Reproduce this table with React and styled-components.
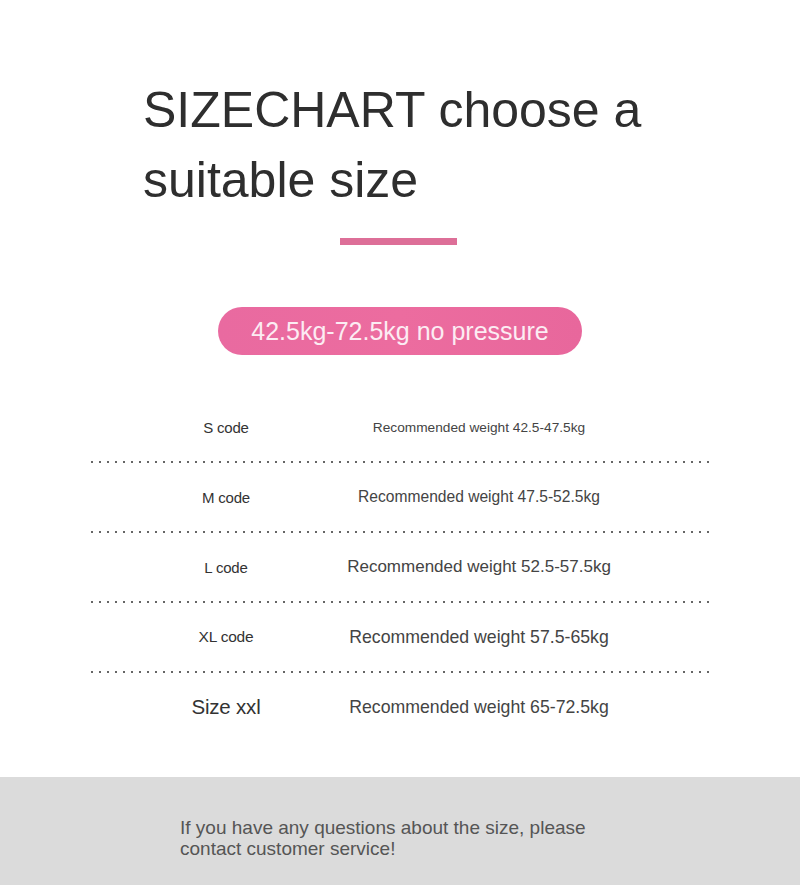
import styled, { createGlobalStyle } from "styled-components";

const sizes = [
  { code: "S code", codeSize: 15, text: "Recommended weight 42.5-47.5kg", textSize: 13.7 },
  { code: "M code", codeSize: 15, text: "Recommended weight 47.5-52.5kg", textSize: 15.6 },
  { code: "L code", codeSize: 15, text: "Recommended weight 52.5-57.5kg", textSize: 17 },
  { code: "XL code", codeSize: 15.5, text: "Recommended weight 57.5-65kg", textSize: 17.7 },
  { code: "Size xxl", codeSize: 20.5, text: "Recommended weight 65-72.5kg", textSize: 17.7 },
];

const App = () => {
  return (
    <>
      <GlobalStyle />
      <Page>
        <Header>
          <Title>
            SIZECHART choose a
            <br />
            suitable size
          </Title>
          <Accent />
          <Pill>42.5kg-72.5kg no pressure</Pill>
        </Header>

        <Chart>
          {sizes.map((row, i) => (
            <div key={row.code}>
              {i > 0 && <Dots />}
              <Row>
                <CodeCell $size={row.codeSize}>{row.code}</CodeCell>
                <WeightCell $size={row.textSize}>{row.text}</WeightCell>
              </Row>
            </div>
          ))}
        </Chart>

        <Footer>
          <FooterText>
            If you have any questions about the size, please
            <br />
            contact customer service!
          </FooterText>
        </Footer>
      </Page>
    </>
  );
};

export default App;

const GlobalStyle = createGlobalStyle`
  body {
    margin: 0;
    background: #fff;
    font-family: "Liberation Sans", Arial, sans-serif;
  }
`;

const Page = styled.div`
  width: 800px;
  display: flex;
  flex-direction: column;
`;

const Header = styled.div`
  display: flex;
  flex-direction: column;
  align-items: center;
  padding-top: 75px;
`;

const Title = styled.h1`
  align-self: flex-start;
  margin: 0 0 0 143px;
  font-size: 50px;
  line-height: 70px;
  font-weight: 400;
  color: #2e2e2e;
`;

const Accent = styled.div`
  width: 117px;
  height: 7px;
  margin-top: 23px;
  margin-left: -3px;
  background: #dd6f98;
`;

const Pill = styled.div`
  width: 364px;
  height: 48px;
  margin-top: 62px;
  border-radius: 24px;
  background: linear-gradient(90deg, #e96aa0, #ec6c9f 50%, #e8679c);
  color: #fcecf3;
  font-size: 25px;
  display: flex;
  align-items: center;
  justify-content: center;
`;

const Chart = styled.div`
  width: 622px;
  margin: 38px 0 0 88px;
`;

const Row = styled.div`
  height: 68px;
  display: grid;
  grid-template-columns: 276px 230px;
  align-items: center;
`;

const CodeCell = styled.div`
  display: flex;
  justify-content: center;
  white-space: nowrap;
  font-size: ${(p) => p.$size}px;
  letter-spacing: -0.2px;
  color: #333;
`;

const WeightCell = styled.div`
  display: flex;
  justify-content: center;
  white-space: nowrap;
  font-size: ${(p) => p.$size}px;
  color: #444;
`;

const Dots = styled.div`
  height: 2px;
  background-image: radial-gradient(circle, #666 1px, transparent 1.4px);
  background-size: 8px 2px;
  background-repeat: repeat-x;
`;

const Footer = styled.div`
  margin-top: 36px;
  height: 110px;
  background: #dbdbdb;
  padding: 40px 0 0 180px;
  box-sizing: border-box;
`;

const FooterText = styled.p`
  margin: 0;
  font-size: 19px;
  line-height: 21px;
  color: #555;
`;
